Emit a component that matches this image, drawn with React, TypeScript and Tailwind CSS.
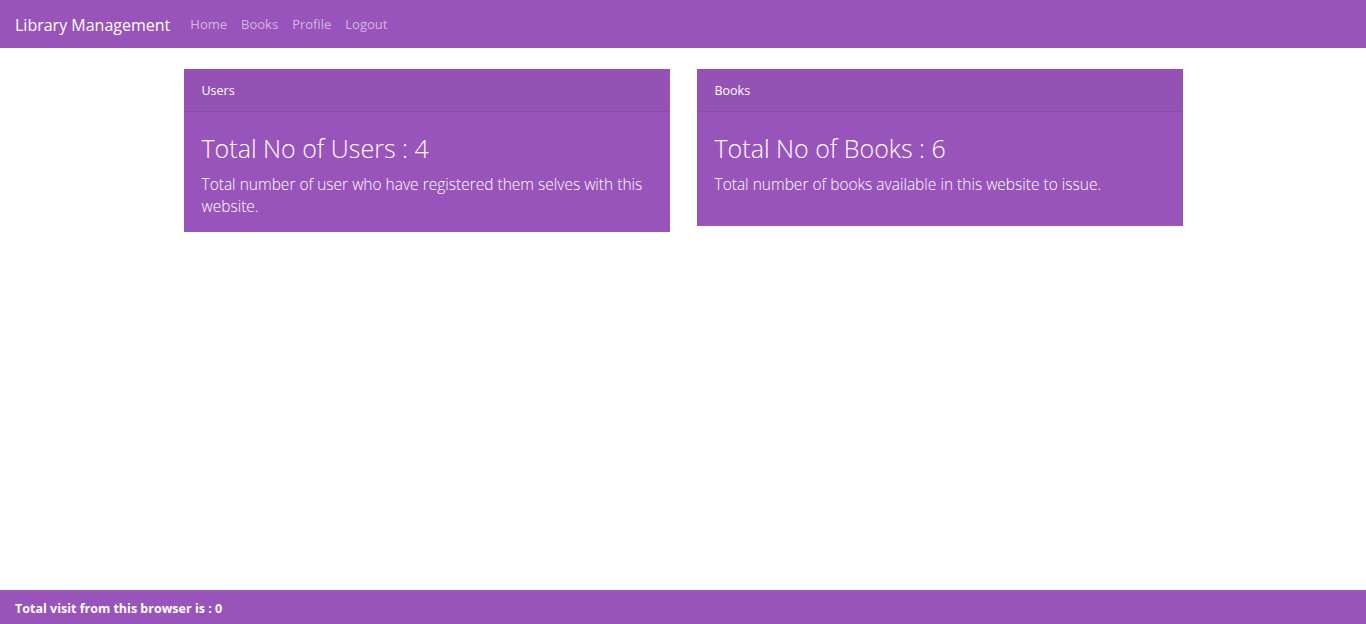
import React from "react";

const font = { fontFamily: '"Open Sans", "Noto Sans", sans-serif' };

function Card({
  header,
  title,
  text,
  minH,
}: {
  header: string;
  title: string;
  text: string;
  minH: string;
}) {
  return (
    <div className={`w-[486px] bg-[#9954bb] text-white ${minH}`}>
      <div className="h-[43px] flex items-center pt-[3px] px-[18px] bg-[#9352b4] border-b border-[#8a4aa9] text-[12.5px]">
        {header}
      </div>
      <div className="px-[18px] pt-[19px] pb-[14px]">
        <h2 className="text-[25px] font-light leading-[34px] mb-[8px]">{title}</h2>
        <p className="text-[15.5px] font-light leading-[22px]">{text}</p>
      </div>
    </div>
  );
}

export default function App() {
  return (
    <div style={font} className="min-h-[624px] flex flex-col bg-white">
      <nav className="h-[48px] bg-[#9954bb] flex items-center px-[15px] pt-[2px]">
        <span className="text-white text-[16px] mr-[20px]">Library Management</span>
        <div className="flex gap-[14px] text-[13px] text-[#d2b6e0]">
          <span>Home</span>
          <span>Books</span>
          <span>Profile</span>
          <span>Logout</span>
        </div>
      </nav>
      <main className="flex-1 flex justify-center items-start gap-[27px] pt-[21px]">
        <Card
          header="Users"
          title="Total No of Users : 4"
          text="Total number of user who have registered them selves with this website."
          minH="min-h-[163px]"
        />
        <Card
          header="Books"
          title="Total No of Books : 6"
          text="Total number of books available in this website to issue."
          minH="min-h-[157px]"
        />
      </main>
      <footer className="h-[34px] bg-[#9954bb] flex items-center px-[15px] pt-[4px] text-white text-[12.5px] font-bold">
        Total visit from this browser is : 0
      </footer>
    </div>
  );
}
